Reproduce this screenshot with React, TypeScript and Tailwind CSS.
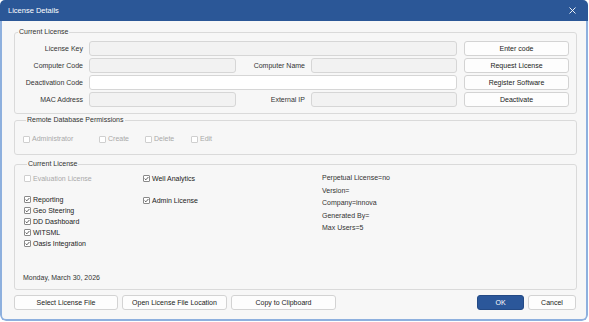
import React from "react";

const font = "font-['Liberation_Sans',Arial,sans-serif]";

function Box({ checked, disabled }: { checked?: boolean; disabled?: boolean }) {
  return (
    <span
      className={`inline-flex items-center justify-center w-[7px] h-[7px] rounded-[1px] border bg-white shrink-0 ${
        disabled ? "border-[#cfcfcf]" : "border-[#8a8a8a]"
      }`}
    >
      {checked && (
        <svg width="5" height="5" viewBox="0 0 5 5">
          <path d="M0.6 2.6 L1.9 3.8 L4.4 1" fill="none" stroke="#333" strokeWidth="0.8" />
        </svg>
      )}
    </span>
  );
}

function Check({ label, checked, disabled }: { label: string; checked?: boolean; disabled?: boolean }) {
  return (
    <div className="flex items-center gap-[2px] h-[11px]">
      <Box checked={checked} disabled={disabled} />
      <span className={disabled ? "text-[#a9a9a9]" : "text-[#222]"}>{label}</span>
    </div>
  );
}

function Input({ w, white }: { w: string; white?: boolean }) {
  return (
    <div
      className={`${w} h-[15px] rounded-[3px] border border-[#d6d6d6] ${white ? "bg-white" : "bg-[#f2f2f2]"}`}
    />
  );
}

function Btn({ label, w }: { label: string; w: string }) {
  return (
    <div
      className={`${w} h-[15px] rounded-[3px] border border-[#d3d3d3] bg-[#fdfdfd] flex items-center justify-center text-[#222]`}
    >
      {label}
    </div>
  );
}

function Label({ text, w }: { text: string; w: string }) {
  return <div className={`${w} text-right text-[#333] leading-[15px]`}>{text}</div>;
}

export default function App() {
  return (
    <div className={`w-[589px] h-[322px] bg-white ${font} text-[7px] leading-[8px]`}>
      <div className="w-[588px] h-[321px] flex flex-col rounded-t-[5px] rounded-b-[6px] overflow-hidden">
        <div className="h-[21px] bg-[#2b5797] flex items-center justify-between pl-[8px] pr-[12px] shrink-0">
          <span className="text-white text-[7.5px] pt-[1px]">License Details</span>
          <svg width="7" height="7" viewBox="0 0 7 7">
            <path d="M0.5 0.5 L6.5 6.5 M6.5 0.5 L0.5 6.5" stroke="#fff" strokeWidth="0.9" />
          </svg>
        </div>
        <div className="flex-1 bg-[#f7f7f7] border-x-2 border-b-2 border-[#8eb0de] rounded-b-[6px] pl-[12px] pr-[9px] pt-[7px] flex flex-col">
          {/* Group 1 */}
          <fieldset className="border border-[#dadada] rounded-[3px] pl-[0px] pr-[7px] pt-[5px] pb-[6px] m-0 min-w-0">
            <legend className="ml-[3px] px-[1px] text-[#333] leading-[8px]">Current License</legend>
            <div className="flex flex-col gap-[2px]">
              <div className="flex items-center">
                <Label text="License Key" w="w-[68px]" />
                <div className="ml-[6px]"><Input w="w-[368px]" /></div>
                <div className="ml-[7px]"><Btn label="Enter code" w="w-[105px]" /></div>
              </div>
              <div className="flex items-center">
                <Label text="Computer Code" w="w-[68px]" />
                <div className="ml-[6px]"><Input w="w-[147px]" /></div>
                <Label text="Computer Name" w="w-[69px]" />
                <div className="ml-[6px]"><Input w="w-[146px]" /></div>
                <div className="ml-[7px]"><Btn label="Request License" w="w-[105px]" /></div>
              </div>
              <div className="flex items-center">
                <Label text="Deactivation Code" w="w-[68px]" />
                <div className="ml-[6px]"><Input w="w-[368px]" white /></div>
                <div className="ml-[7px]"><Btn label="Register Software" w="w-[105px]" /></div>
              </div>
              <div className="flex items-center">
                <Label text="MAC Address" w="w-[68px]" />
                <div className="ml-[6px]"><Input w="w-[147px]" /></div>
                <Label text="External IP" w="w-[69px]" />
                <div className="ml-[6px]"><Input w="w-[146px]" /></div>
                <div className="ml-[7px]"><Btn label="Deactivate" w="w-[105px]" /></div>
              </div>
            </div>
          </fieldset>

          {/* Group 2 */}
          <fieldset className="border border-[#dadada] rounded-[3px] pl-[8px] pt-[11px] pb-[11px] mt-[2px] m-0 min-w-0">
            <legend className="ml-[3px] px-[1px] text-[#333] leading-[8px]">Remote Database Permissions</legend>
            <div className="flex items-center h-[8px]">
              <div className="w-[76px]"><Check label="Administrator" disabled /></div>
              <div className="w-[46px]"><Check label="Create" disabled /></div>
              <div className="w-[46px]"><Check label="Delete" disabled /></div>
              <div><Check label="Edit" disabled /></div>
            </div>
          </fieldset>

          {/* Group 3 */}
          <fieldset className="border border-[#dadada] rounded-[3px] pl-[9px] pt-[5px] pb-[7px] mt-[5px] m-0 min-w-0">
            <legend className="ml-[3px] px-[1px] text-[#333] leading-[8px]">Current License</legend>
            <div className="flex">
              <div className="w-[119px] flex flex-col">
                <Check label="Evaluation License" disabled />
                <div className="h-[10px]" />
                <Check label="Reporting" checked />
                <Check label="Geo Steering" checked />
                <Check label="DD Dashboard" checked />
                <Check label="WITSML" checked />
                <Check label="Oasis Integration" checked />
                <div className="mt-[25px] ml-[-1px] text-[#333] leading-[8px]">Monday, March 30, 2026</div>
              </div>
              <div className="w-[179px] flex flex-col">
                <Check label="Well Analytics" checked />
                <div className="h-[11px]" />
                <Check label="Admin License" checked />
              </div>
              <div className="flex flex-col text-[#333] leading-[12.5px] mt-[-1px]">
                <span>Perpetual License=no</span>
                <span>Version=</span>
                <span>Company=innova</span>
                <span>Generated By=</span>
                <span>Max Users=5</span>
              </div>
            </div>
          </fieldset>

          {/* Bottom buttons */}
          <div className="flex items-center mt-[5px]">
            <Btn label="Select License File" w="w-[104px]" />
            <div className="ml-[4px]"><Btn label="Open License File Location" w="w-[105px]" /></div>
            <div className="ml-[4px]"><Btn label="Copy to Clipboard" w="w-[105px]" /></div>
            <div className="flex-1" />
            <div className="w-[47px] h-[15px] rounded-[3px] bg-[#2b579a] border border-[#244a85] flex items-center justify-center text-white">OK</div>
            <div className="ml-[4px] mr-[1px]"><Btn label="Cancel" w="w-[48px]" /></div>
          </div>
        </div>
      </div>
    </div>
  );
}
